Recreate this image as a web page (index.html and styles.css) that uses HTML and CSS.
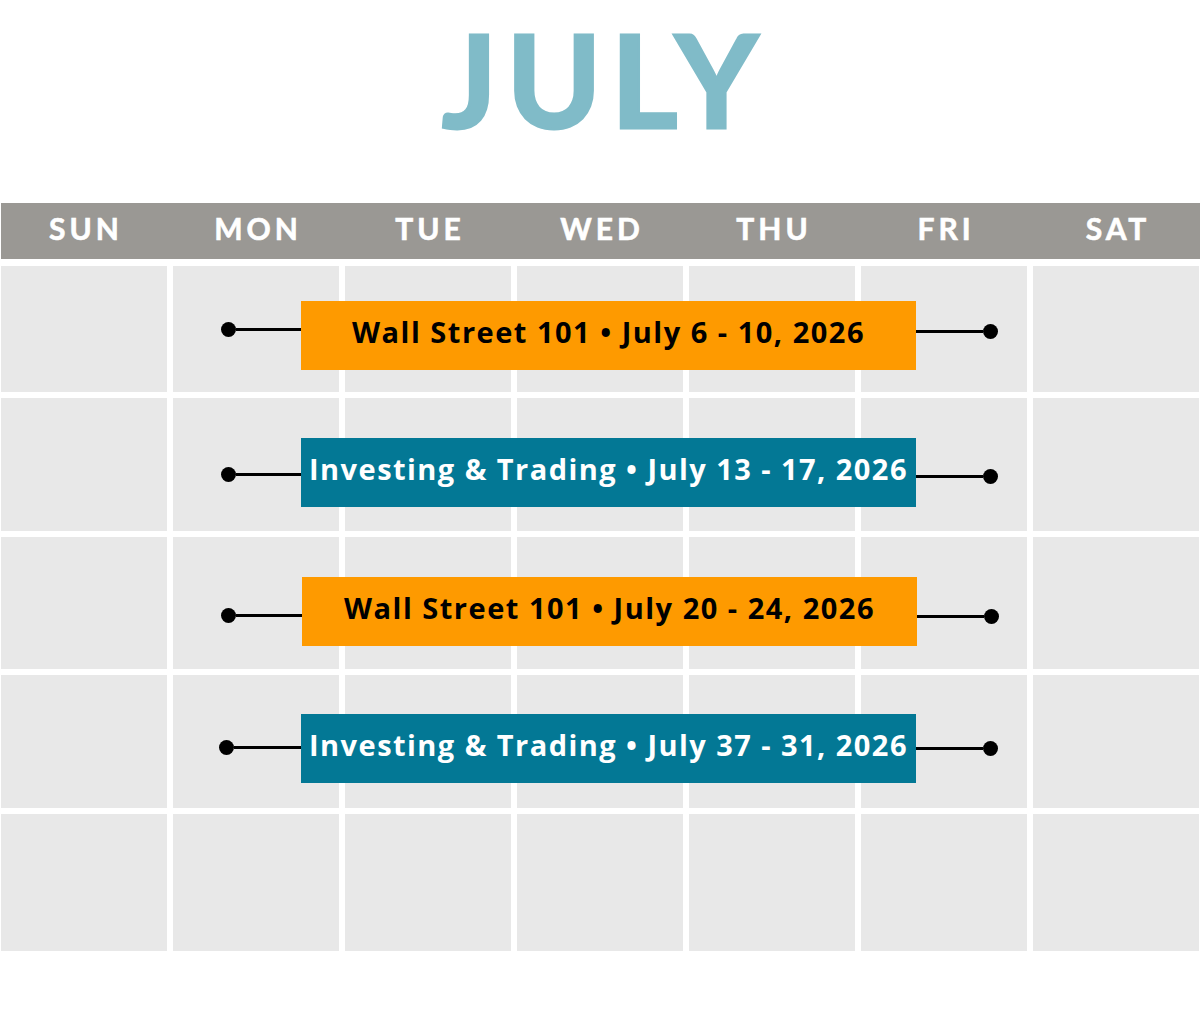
FILE: index.html
```html
<!DOCTYPE html>
<html lang="en">
<head>
<meta charset="utf-8">
<title>July</title>
<link rel="stylesheet" href="styles.css">
</head>
<body>
<div class="page">
  <header class="title">
    <h1>JULY</h1>
  </header>
  <div class="days">
    <div class="day">SUN</div>
    <div class="day">MON</div>
    <div class="day">TUE</div>
    <div class="day">WED</div>
    <div class="day">THU</div>
    <div class="day">FRI</div>
    <div class="day">SAT</div>
  </div>
  <div class="calendar">
    <div class="grid cells">
      <div class="cell"></div><div class="cell"></div><div class="cell"></div><div class="cell"></div><div class="cell"></div><div class="cell"></div><div class="cell"></div>
      <div class="cell"></div><div class="cell"></div><div class="cell"></div><div class="cell"></div><div class="cell"></div><div class="cell"></div><div class="cell"></div>
      <div class="cell"></div><div class="cell"></div><div class="cell"></div><div class="cell"></div><div class="cell"></div><div class="cell"></div><div class="cell"></div>
      <div class="cell"></div><div class="cell"></div><div class="cell"></div><div class="cell"></div><div class="cell"></div><div class="cell"></div><div class="cell"></div>
      <div class="cell"></div><div class="cell"></div><div class="cell"></div><div class="cell"></div><div class="cell"></div><div class="cell"></div><div class="cell"></div>
    </div>
    <div class="grid events">
      <div class="event e1">
        <span class="dot left"></span><span class="line left"></span>
        <div class="bar orange">Wall Street 101 • July 6 - 10, 2026</div>
        <span class="line right"></span><span class="dot right"></span>
      </div>
      <div class="event e2">
        <span class="dot left"></span><span class="line left"></span>
        <div class="bar teal">Investing &amp; Trading • July 13 - 17, 2026</div>
        <span class="line right"></span><span class="dot right"></span>
      </div>
      <div class="event e3">
        <span class="dot left"></span><span class="line left"></span>
        <div class="bar orange">Wall Street 101 • July 20 - 24, 2026</div>
        <span class="line right"></span><span class="dot right"></span>
      </div>
      <div class="event e4">
        <span class="dot left"></span><span class="line left"></span>
        <div class="bar teal">Investing &amp; Trading • July 37 - 31, 2026</div>
        <span class="line right"></span><span class="dot right"></span>
      </div>
    </div>
  </div>
</div>
</body>
</html>
```

FILE: styles.css
```css
html, body {
  margin: 0;
  padding: 0;
  background: #ffffff;
}

.page {
  width: 1200px;
  height: 1015px;
  font-family: "Lato", "Liberation Sans", sans-serif;
}

.title {
  height: 203px;
  box-sizing: border-box;
  padding-top: 15px;
  display: flex;
  justify-content: center;
}

.title h1 {
  margin: 0;
  font-size: 128px;
  line-height: 1;
  font-weight: 700;
  color: #80bbc8;
  -webkit-text-stroke: 3px #80bbc8;
  letter-spacing: 9.5px;
  padding-left: 9.5px;
}

.days {
  height: 56px;
  margin-left: 1px;
  background: #9a9894;
  display: grid;
  grid-template-columns: repeat(7, 166px);
  column-gap: 6px;
  box-sizing: border-box;
  padding-bottom: 6px;
}

.day {
  color: #ffffff;
  font-weight: 700;
  font-size: 30px;
  line-height: 50px;
  letter-spacing: 4px;
  text-align: center;
  padding-left: 4px;
  -webkit-text-stroke: 0.6px #ffffff;
}

.calendar {
  margin-top: 7px;
  margin-left: 1px;
  display: grid;
}

.grid {
  grid-area: 1 / 1;
  display: grid;
  grid-template-columns: repeat(7, 166px);
  grid-template-rows: 126px 133px 132px 133px 137px;
  column-gap: 6px;
  row-gap: 6px;
}

.cell {
  background: #e8e8e8;
}

.event {
  grid-column: 2 / 7;
  align-self: start;
  justify-self: start;
  display: flex;
  align-items: flex-start;
  margin-left: 48px;
  --l: 28px;
  --r: 30px;
}

.e1 { grid-row: 1; margin-top: 35px; --l: 28px; --r: 30px; }
.e2 { grid-row: 2; margin-top: 40px; --l: 36px; --r: 38px; }
.e3 { grid-row: 3; margin-top: 40px; margin-left: 48px; --l: 38px; --r: 39px; }
.e4 { grid-row: 4; margin-top: 39px; margin-left: 46px; --l: 33px; --r: 34px; }

.dot {
  width: 15px;
  height: 15px;
  border-radius: 50%;
  background: #000000;
  flex: none;
}

.line {
  height: 3px;
  background: #000000;
  flex: none;
}

.dot.left { margin-top: calc(var(--l) - 7.5px); }
.line.left { margin-top: calc(var(--l) - 1.5px); width: 65px; }
.line.right { margin-top: calc(var(--r) - 1.5px); width: 67px; }
.dot.right { margin-top: calc(var(--r) - 7.5px); }
.e3 .line.left { width: 66px; }
.e4 .line.left { width: 67px; }

.bar {
  width: 615px;
  height: 69px;
  box-sizing: border-box;
  padding-bottom: 7px;
  line-height: 62px;
  font-family: "Open Sans", "Noto Sans", sans-serif;
  font-size: 29px;
  font-weight: 700;
  letter-spacing: 1.5px;
  text-align: center;
  white-space: nowrap;
  flex: none;
}

.orange {
  background: #fe9a00;
  color: #000000;
}

.teal {
  background: #037895;
  color: #ffffff;
  letter-spacing: 1.45px;
}
```
